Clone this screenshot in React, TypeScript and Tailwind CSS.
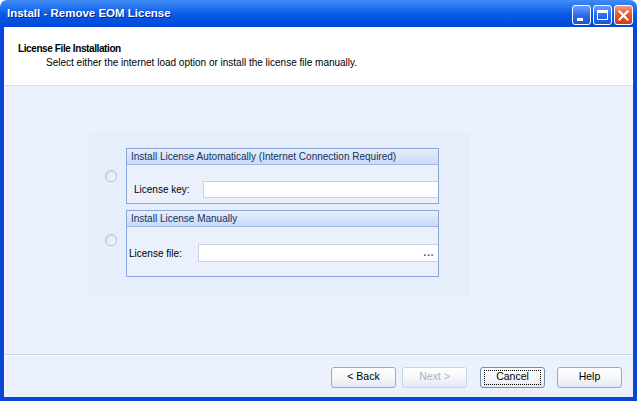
import React from 'react'

const font = { fontFamily: '"Liberation Sans", Arial, sans-serif' }

function TitleButton({ kind }: { kind: 'min' | 'max' | 'close' }) {
  const base =
    kind === 'close'
      ? 'bg-gradient-to-b from-[#f09a7c] via-[#e2542c] to-[#c8401c]'
      : 'bg-gradient-to-b from-[#6e9df7] via-[#2d6cf0] to-[#1d52d6]'
  return (
    <div className={`w-[19px] h-[20px] rounded-[3px] border border-white ${base} flex items-center justify-center`}>
      {kind === 'min' && <div className="w-[6px] h-[3px] bg-white mt-[9px] -ml-[4px]" />}
      {kind === 'max' && <div className="w-[11px] h-[10px] border border-white border-t-[3px]" />}
      {kind === 'close' && (
        <svg width="11" height="11" viewBox="0 0 11 11">
          <path d="M1.5 1.5 L9.5 9.5 M9.5 1.5 L1.5 9.5" stroke="white" strokeWidth="2.2" strokeLinecap="square" />
        </svg>
      )}
    </div>
  )
}

function Radio() {
  return (
    <div className="w-[12px] h-[12px] rounded-full border border-[#b3bdd1] bg-gradient-to-br from-[#d2d8e4] to-white flex items-center justify-center">
      <div className="w-[6px] h-[6px] rounded-full bg-[#eceff5]" />
    </div>
  )
}

function Btn({ label, disabled, focus }: { label: string; disabled?: boolean; focus?: boolean }) {
  return (
    <div
      className={`w-[65px] h-[21px] rounded-[3px] border flex items-center justify-center text-[10.5px] bg-gradient-to-b from-white via-[#f6f7fa] to-[#e3e8f2] ${
        disabled ? 'border-[#c9d3e4] text-[#a7b2c6]' : focus ? 'border-[#7a8cae] text-black' : 'border-[#98a9c8] text-black'
      }`}
    >
      {focus ? (
        <div className="w-[57px] h-[15px] border border-dotted border-black flex items-center justify-center">{label}</div>
      ) : (
        label
      )}
    </div>
  )
}

function GroupBox({ title, children, bodyClass }: { title: string; children: React.ReactNode; bodyClass: string }) {
  return (
    <div className="w-[313px] border border-[#8aa6dc] bg-[#eaf1fd]">
      <div className="h-[16px] border-b border-[#9fb8e6] bg-gradient-to-b from-[#e7eefb] to-[#c9daf6] px-[4px] flex items-center text-[10px] text-[#15305e]">
        {title}
      </div>
      <div className={bodyClass}>{children}</div>
    </div>
  )
}

export default function App() {
  return (
    <div className="w-[637px] h-[401px] bg-white flex flex-col overflow-hidden" style={font}>
      {/* title bar */}
      <div className="h-[27px] shrink-0 rounded-t-[7px] bg-gradient-to-b from-[#3f8cf3] via-[#0a5ce8] to-[#0048d8] flex items-center pl-[7px] pr-[4px]">
        <div className="text-white font-bold text-[11.5px] [text-shadow:1px_1px_0_#0a1e8c] flex-1">
          Install - Remove EOM License
        </div>
        <div className="flex gap-[2px] mt-[3px]">
          <TitleButton kind="min" />
          <TitleButton kind="max" />
          <TitleButton kind="close" />
        </div>
      </div>

      {/* client with frame */}
      <div className="flex-1 flex flex-col border-x-4 border-b-4 border-[#0a45d6]">
        <div className="flex-1 flex flex-col border-l border-[#f4f7fd]">
          {/* header */}
          <div className="h-[59px] shrink-0 bg-white border-b border-[#d6e0f3] pl-[13px] pt-[14px]">
            <div className="font-bold text-[10px] tracking-[-0.4px] text-black">License File Installation</div>
            <div className="text-[10px] text-black pl-[28px] -mt-[1px]">
              Select either the internet load option or install the license file manually.
            </div>
          </div>

          {/* body */}
          <div className="h-[269px] shrink-0 bg-[#ecf2fd] border-b border-[#c9d6ef] pt-[46px] pl-[84px]">
            <div className="w-[381px] h-[164px] bg-[#e6eefc] pt-[16px] flex flex-col gap-[6px]">
              <div className="flex items-center">
                <div className="w-[37px] flex justify-center pl-[6px]">
                  <Radio />
                </div>
                <GroupBox title="Install License Automatically (Internet Connection Required)" bodyClass="h-[38px] flex items-center pl-[7px] pt-[10px]">
                  <div className="w-[69px] text-[10px]">License key:</div>
                  <div className="flex-1 h-[17px] bg-white border border-[#c5d3ea] border-r-0" />
                </GroupBox>
              </div>
              <div className="flex items-center">
                <div className="w-[37px] flex justify-center pl-[6px] -mt-[8px]">
                  <Radio />
                </div>
                <GroupBox title="Install License Manually" bodyClass="h-[49px] flex items-start pl-[2px] pt-[17px]">
                  <div className="w-[69px] h-[18px] flex items-center text-[10px]">License file:</div>
                  <div className="flex-1 h-[18px] bg-white border border-[#c5d3ea] border-r-0 flex items-center justify-end pr-[4px]">
                    <span className="text-[11px] font-bold text-[#3a5a9a] leading-none tracking-[0.5px] -mt-[2px]">...</span>
                  </div>
                </GroupBox>
              </div>
            </div>
          </div>

          {/* buttons */}
          <div className="flex-1 bg-[#ecf2fd] border-t border-[#f6f9fe] flex items-center pt-[1px] pl-[326px]">
            <Btn label="< Back" />
            <div className="w-[6px]" />
            <Btn label="Next >" disabled />
            <div className="w-[13px]" />
            <Btn label="Cancel" focus />
            <div className="w-[12px]" />
            <Btn label="Help" />
          </div>
        </div>
      </div>
    </div>
  )
}
